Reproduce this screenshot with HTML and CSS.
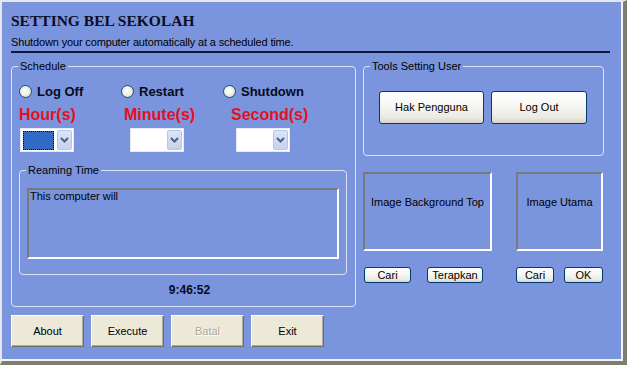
FILE: index.html
```html
<!DOCTYPE html>
<html>
<head>
<meta charset="utf-8">
<title>Setting Bel Sekolah</title>
<link rel="stylesheet" href="styles.css">
</head>
<body>
<div class="win">
  <header class="head">
    <h1 class="title">SETTING BEL SEKOLAH</h1>
    <p class="sub">Shutdown your computer automatically at a scheduled time.</p>
  </header>
  <div class="main">
    <div class="col-left">
      <fieldset class="group schedule">
        <legend>Schedule</legend>
        <div class="schedule-body">
          <div class="sched-grid">
            <div class="opt">
              <label class="radio"><span class="dot"></span>Log Off</label>
              <div class="unit">Hour(s)</div>
              <div class="combo combo-a">
                <span class="field"><span class="sel"></span></span>
                <span class="drop"><svg width="9" height="6" viewBox="0 0 9 6"><path d="M1 1 L4.5 4.5 L8 1" fill="none" stroke="#4d6185" stroke-width="2"/></svg></span>
              </div>
            </div>
            <div class="opt">
              <label class="radio"><span class="dot"></span>Restart</label>
              <div class="unit unit-b">Minute(s)</div>
              <div class="combo combo-b">
                <span class="field"></span>
                <span class="drop"><svg width="9" height="6" viewBox="0 0 9 6"><path d="M1 1 L4.5 4.5 L8 1" fill="none" stroke="#4d6185" stroke-width="2"/></svg></span>
              </div>
            </div>
            <div class="opt">
              <label class="radio"><span class="dot"></span>Shutdown</label>
              <div class="unit unit-c">Second(s)</div>
              <div class="combo combo-c">
                <span class="field"></span>
                <span class="drop"><svg width="9" height="6" viewBox="0 0 9 6"><path d="M1 1 L4.5 4.5 L8 1" fill="none" stroke="#4d6185" stroke-width="2"/></svg></span>
              </div>
            </div>
          </div>
          <fieldset class="group remain">
            <legend>Reaming Time</legend>
            <div class="remain-body">
              <div class="sunken textbox">This computer will</div>
            </div>
          </fieldset>
          <div class="clock">9:46:52</div>
        </div>
      </fieldset>
      <div class="actions">
        <button class="btn-classic">About</button>
        <button class="btn-classic">Execute</button>
        <button class="btn-classic is-disabled">Batal</button>
        <button class="btn-classic">Exit</button>
      </div>
    </div>
    <div class="col-right">
      <fieldset class="group tools">
        <legend>Tools Setting User</legend>
        <div class="tool-row">
          <button class="btn-xp btn-big btn-hak">Hak Pengguna</button>
          <button class="btn-xp btn-big btn-logout">Log Out</button>
        </div>
      </fieldset>
      <div class="images">
        <div class="img-col img-col-bg">
          <div class="sunken img-box">Image Background Top</div>
          <div class="img-btns img-btns-bg">
            <button class="btn-xp btn-small btn-cari">Cari</button>
            <button class="btn-xp btn-small btn-terapkan">Terapkan</button>
          </div>
        </div>
        <div class="img-col img-col-main">
          <div class="sunken img-box">Image Utama</div>
          <div class="img-btns img-btns-main">
            <button class="btn-xp btn-small btn-cari2">Cari</button>
            <button class="btn-xp btn-small btn-ok">OK</button>
          </div>
        </div>
      </div>
    </div>
  </div>
</div>
</body>
</html>
```

FILE: styles.css
```css
* { box-sizing: border-box; }

html, body {
  margin: 0;
  padding: 0;
  background: #7a95dd;
}

.win {
  width: 627px;
  height: 365px;
  background: #7a95dd;
  border-style: solid;
  border-width: 2px 4px 4px 2px;
  border-color: #e6e7ea #7d7e70 #7d7e70 #e6e7ea;
  box-shadow: inset -2px -2px 0 #f4f4f4;
  font-family: "Liberation Sans", Arial, sans-serif;
  font-size: 11px;
  color: #000;
  overflow: hidden;
}

/* header */
.head {
  margin: 0 13px 0 9px;
  padding-bottom: 2px;
  border-bottom: 2px solid #10173a;
}

.title {
  margin: 10px 0 0;
  font-family: "Liberation Serif", "Times New Roman", serif;
  font-weight: bold;
  font-size: 15.5px;
  line-height: 18px;
  color: #0c0c26;
}

.sub {
  margin: 6px 0 0;
  font-size: 11px;
  line-height: 13px;
  letter-spacing: -0.15px;
}

/* main layout */
.main {
  display: flex;
  gap: 7px;
  margin-top: 7px;
  padding-left: 9px;
}

.col-left { width: 345px; }
.col-right { width: 241px; }

/* group boxes */
.group {
  margin: 0;
  padding: 0;
  min-width: 0;
  border: 1px solid #dbe3f6;
  border-radius: 4px;
}

.group > legend {
  margin-left: 6px;
  padding: 0 2px;
  font-size: 11px;
  line-height: 13px;
  color: #000;
}

.schedule-body {
  padding: 12px 0 9px 7px;
}

.sched-grid {
  display: grid;
  grid-template-columns: 102px 102px 102px;
}

.radio {
  display: flex;
  align-items: center;
  height: 13px;
  font-weight: bold;
  font-size: 13px;
  color: #060a20;
  white-space: nowrap;
}

.dot {
  width: 13px;
  height: 13px;
  margin-right: 5px;
  border-radius: 50%;
  border: 1px solid #1d4f7c;
  background: radial-gradient(circle at 45% 45%, #ffffff 0%, #f1efe6 45%, #cdc9bc 100%);
  flex: none;
}

.unit {
  margin-top: 8px;
  font-weight: bold;
  font-size: 16px;
  line-height: 18px;
  color: #e4101f;
  white-space: nowrap;
}
.unit-b { margin-left: 3px; }
.unit-c { margin-left: 8px; }

.combo {
  display: flex;
  width: 54px;
  height: 24px;
  margin-top: 4px;
  padding: 1px;
  background: #fff;
  border: 1px solid #e4eaf8;
}
.combo-a { margin-left: 1px; }
.combo-b { margin-left: 9px; }
.combo-c { margin-left: 13px; }

.field {
  flex: 1;
  padding: 1px 2px 0 1px;
}

.sel {
  display: block;
  width: 100%;
  height: 19px;
  background: #316ac5;
  outline: 1px dotted #000;
  outline-offset: -1px;
}

.drop {
  width: 15px;
  height: 20px;
  margin: 0 0 0 1px;
  display: flex;
  align-items: center;
  justify-content: center;
  border: 1px solid #b7c6e6;
  border-radius: 2px;
  background: linear-gradient(180deg, #dbe4f7 0%, #c6d3ee 100%);
}

/* reaming time */
.remain {
  width: 328px;
  margin-top: 12px;
}

.remain-body {
  padding: 11px 0 15px 7px;
}

.sunken {
  border-style: solid;
  border-width: 2px;
  border-color: #7a7a7a #ffffff #ffffff #7a7a7a;
}

.textbox {
  width: 312px;
  height: 71px;
  padding: 0 2px 0 1px;
  line-height: 13px;
}

.clock {
  margin-top: 8px;
  padding-left: 5px;
  text-align: center;
  font-weight: bold;
  font-size: 12px;
  line-height: 14px;
  color: #060a20;
}

/* bottom buttons */
.actions {
  display: flex;
  gap: 7px;
  margin-top: 8px;
}

button {
  margin: 0;
  padding: 0;
  font-family: "Liberation Sans", Arial, sans-serif;
  font-size: 11px;
  color: #000;
}

.btn-classic {
  width: 73px;
  height: 32px;
  background: #ece9d8;
  border: 1px solid;
  border-color: #ffffff #716f64 #716f64 #ffffff;
  box-shadow: inset -1px -1px 0 #aca899;
}

.is-disabled {
  color: #aca899;
  text-shadow: 1px 1px 0 #fff;
}

/* xp buttons */
.btn-xp {
  border: 1px solid #003c74;
  border-radius: 3px;
  background: linear-gradient(180deg, #ffffff 0%, #f6f6f2 45%, #ecebe4 80%, #d9d4c8 100%);
  line-height: 13px;
}

.tools { height: 96px; }

.tool-row {
  display: flex;
  gap: 7px;
  margin-top: 18px;
  padding-left: 15px;
}

.btn-big { height: 33px; }
.btn-hak { width: 105px; }
.btn-logout { width: 96px; }

/* image boxes */
.images {
  display: flex;
  gap: 24px;
  margin-top: 16px;
}

.img-col-bg { width: 129px; }
.img-col-main { width: 87px; }

.img-box {
  height: 79px;
  padding-top: 22px;
  text-align: center;
  line-height: 13px;
  white-space: nowrap;
}

.img-btns {
  display: flex;
  margin-top: 16px;
}
.img-btns-bg { gap: 16px; padding-left: 1px; }
.img-btns-main { gap: 10px; }

.btn-small { height: 16px; }
.btn-cari { width: 47px; }
.btn-terapkan { width: 56px; }
.btn-cari2 { width: 38px; }
.btn-ok { width: 39px; }
```
